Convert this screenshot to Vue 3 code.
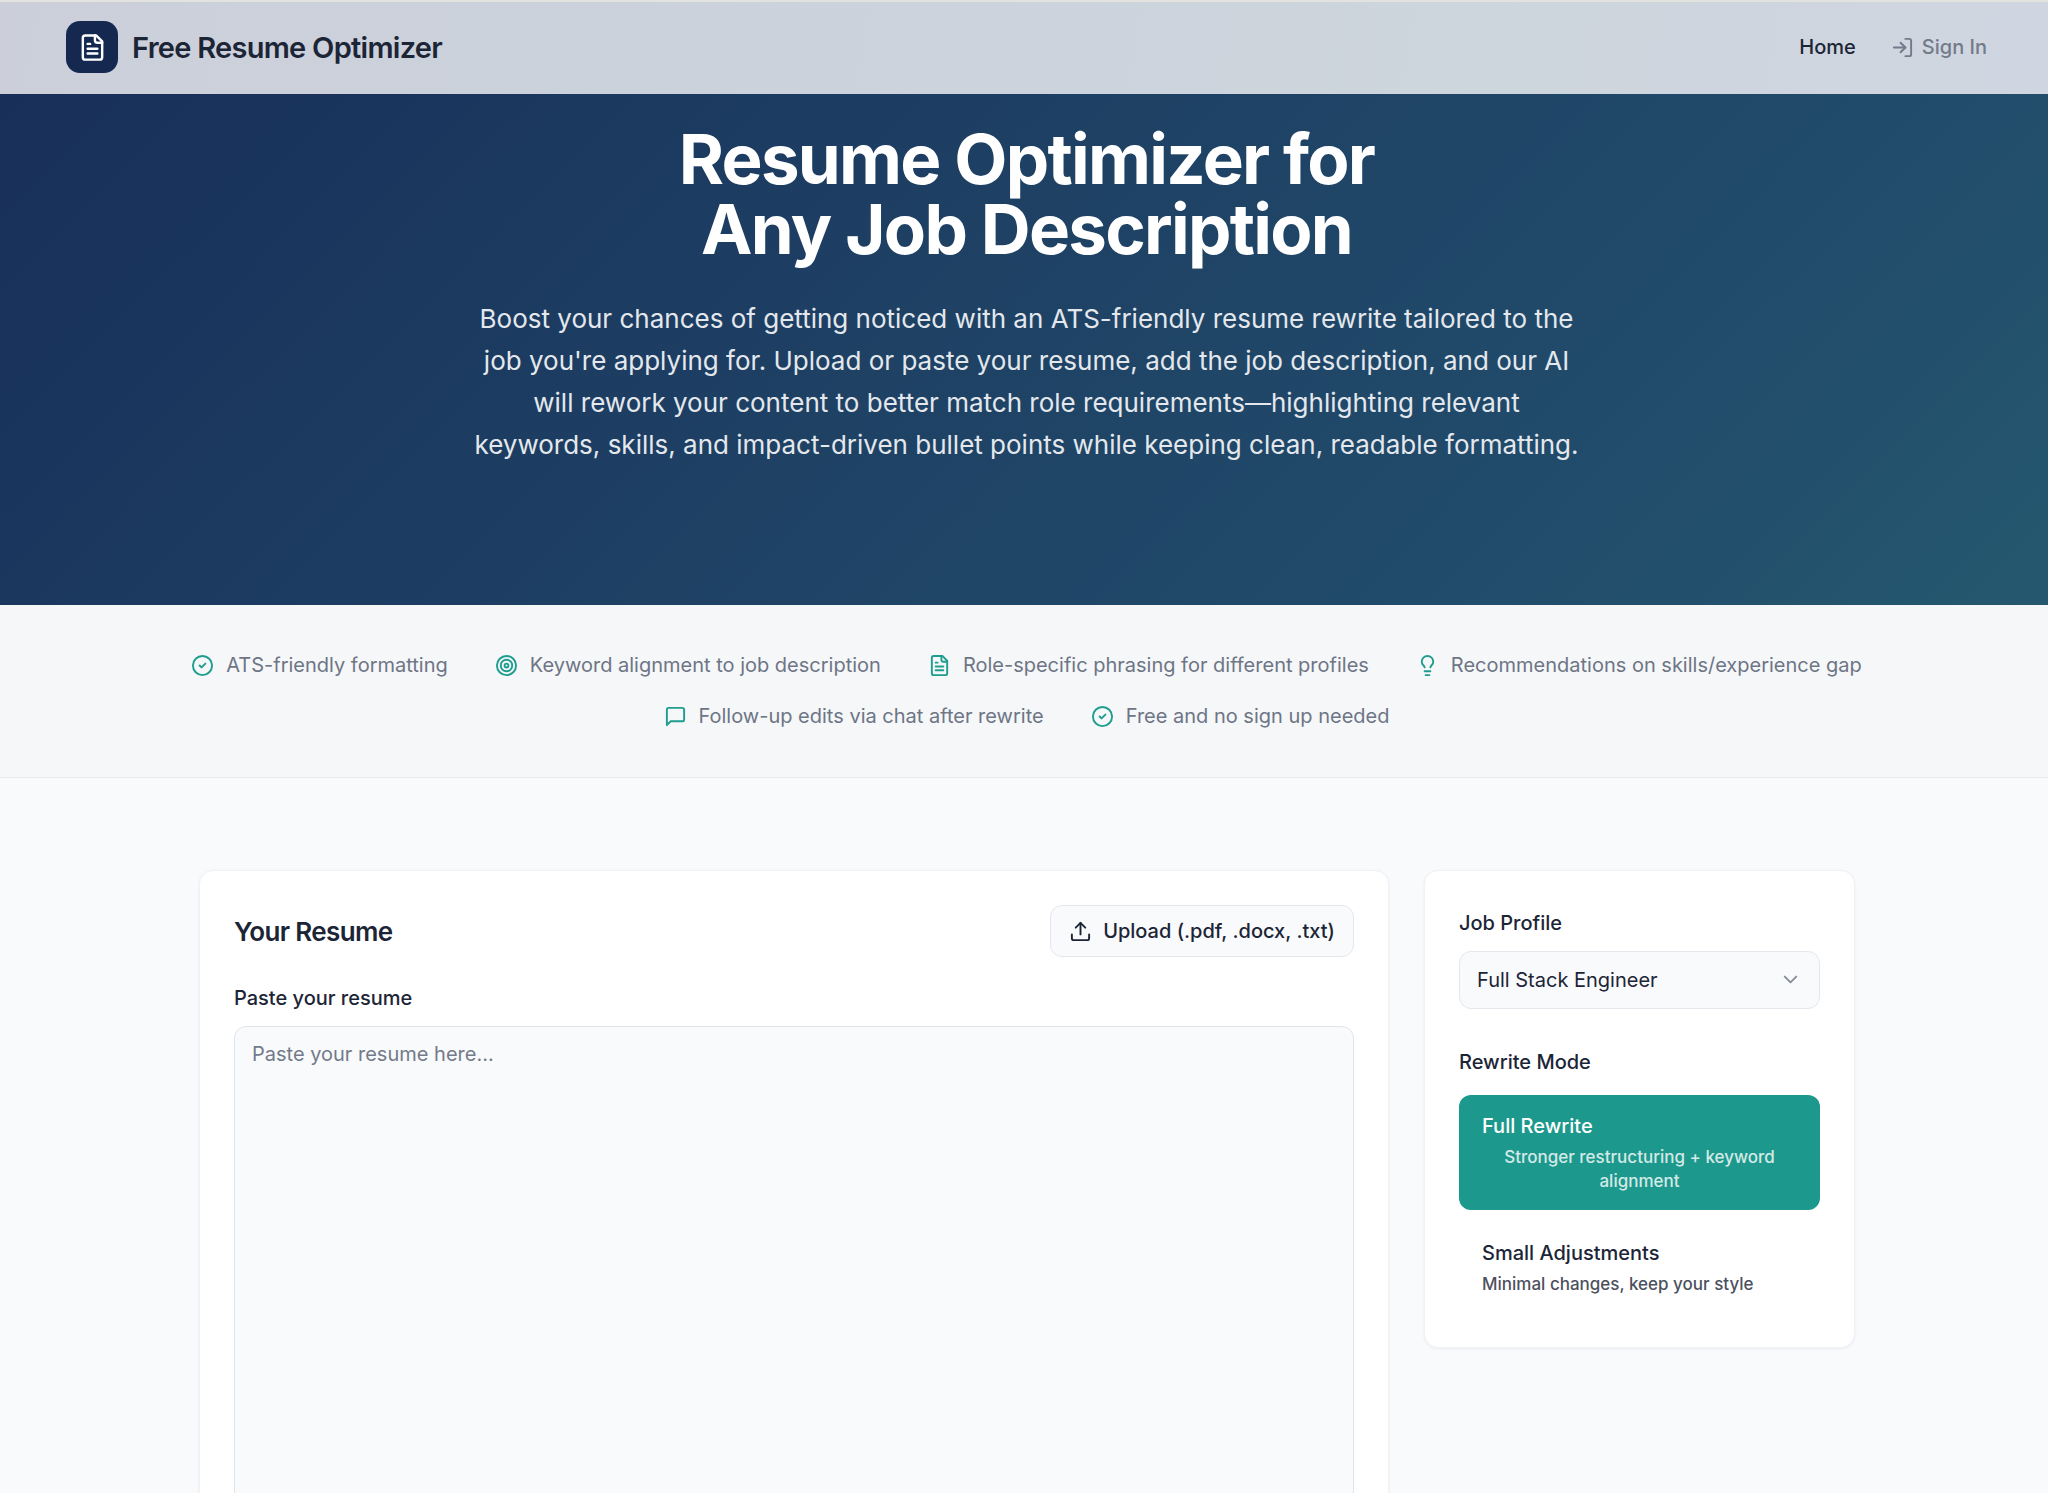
<template>
  <div class="page">
    <header class="navbar">
      <a class="brand" href="#">
        <span class="brand-icon">
          <svg class="icon icon-lg" viewBox="0 0 24 24">
            <path v-for="d in icons.file" :key="d" :d="d" />
          </svg>
        </span>
        <span class="brand-name">Free Resume Optimizer</span>
      </a>
      <nav class="nav-links">
        <a class="nav-link active" href="#">Home</a>
        <a class="nav-link" href="#">
          <svg class="icon" viewBox="0 0 24 24">
            <path v-for="d in icons.login" :key="d" :d="d" />
          </svg>
          Sign In
        </a>
      </nav>
    </header>

    <section class="hero">
      <h1>Resume Optimizer for<br />Any Job Description</h1>
      <p>
        Boost your chances of getting noticed with an ATS-friendly resume rewrite tailored to the
        job you're applying for. Upload or paste your resume, add the job description, and our AI
        will rework your content to better match role requirements—highlighting relevant
        keywords, skills, and impact-driven bullet points while keeping clean, readable formatting.
      </p>
    </section>

    <section class="features">
      <ul class="feature-list">
        <li v-for="feature in features" :key="feature.text" class="feature">
          <svg class="icon" viewBox="0 0 24 24">
            <path v-for="d in icons[feature.icon]" :key="d" :d="d" />
          </svg>
          <span>{{ feature.text }}</span>
        </li>
      </ul>
    </section>

    <main class="content">
      <section class="card">
        <div class="card-header">
          <h2>Your Resume</h2>
          <button class="btn-upload" type="button">
            <svg class="icon" viewBox="0 0 24 24">
              <path v-for="d in icons.upload" :key="d" :d="d" />
            </svg>
            Upload (.pdf, .docx, .txt)
          </button>
        </div>
        <label class="label" for="resume">Paste your resume</label>
        <textarea id="resume" v-model="resume" placeholder="Paste your resume here..."></textarea>
      </section>

      <aside class="card">
        <label class="label" for="profile">Job Profile</label>
        <div class="select-wrap">
          <select id="profile" v-model="profile">
            <option v-for="p in profiles" :key="p" :value="p">{{ p }}</option>
          </select>
          <svg class="icon chevron" viewBox="0 0 24 24">
            <path d="m6 9 6 6 6-6" />
          </svg>
        </div>

        <div class="mode-group" role="group" aria-labelledby="mode-label">
          <div id="mode-label" class="label">Rewrite Mode</div>
          <div class="modes">
            <button
              v-for="m in modes"
              :key="m.id"
              type="button"
              class="mode"
              :class="{ selected: mode === m.id }"
              :aria-pressed="mode === m.id"
              @click="mode = m.id"
            >
              <span>{{ m.title }}</span>
              <span class="mode-hint">{{ m.hint }}</span>
            </button>
          </div>
        </div>
      </aside>
    </main>
  </div>
</template>

<script setup>
import { ref } from 'vue'

const resume = ref('')
const profile = ref('Full Stack Engineer')
const mode = ref('full')

const profiles = ['Full Stack Engineer']

const modes = [
  { id: 'full', title: 'Full Rewrite', hint: 'Stronger restructuring + keyword alignment' },
  { id: 'small', title: 'Small Adjustments', hint: 'Minimal changes, keep your style' },
]

const features = [
  { icon: 'check', text: 'ATS-friendly formatting' },
  { icon: 'target', text: 'Keyword alignment to job description' },
  { icon: 'file', text: 'Role-specific phrasing for different profiles' },
  { icon: 'bulb', text: 'Recommendations on skills/experience gap' },
  { icon: 'chat', text: 'Follow-up edits via chat after rewrite' },
  { icon: 'check', text: 'Free and no sign up needed' },
]

// path data for the 24x24 outline icons
const icons = {
  file: [
    'M15 2H6a2 2 0 0 0-2 2v16a2 2 0 0 0 2 2h12a2 2 0 0 0 2-2V7Z',
    'M14 2v4a2 2 0 0 0 2 2h4',
    'M10 9H8',
    'M16 13H8',
    'M16 17H8',
  ],
  login: ['M15 3h4a2 2 0 0 1 2 2v14a2 2 0 0 1-2 2h-4', 'M10 17l5-5-5-5', 'M15 12H3'],
  check: ['M2 12a10 10 0 1 0 20 0a10 10 0 1 0-20 0', 'm9 12 2 2 4-4'],
  target: [
    'M2 12a10 10 0 1 0 20 0a10 10 0 1 0-20 0',
    'M6 12a6 6 0 1 0 12 0a6 6 0 1 0-12 0',
    'M10 12a2 2 0 1 0 4 0a2 2 0 1 0-4 0',
  ],
  bulb: [
    'M15 14c.2-1 .7-1.7 1.5-2.5 1-.9 1.5-2.2 1.5-3.5A6 6 0 0 0 6 8c0 1 .2 2.2 1.5 3.5.7.7 1.3 1.5 1.5 2.5',
    'M9 18h6',
    'M10 22h4',
  ],
  chat: ['M21 15a2 2 0 0 1-2 2H7l-4 4V5a2 2 0 0 1 2-2h14a2 2 0 0 1 2 2z'],
  upload: ['M21 15v4a2 2 0 0 1-2 2H5a2 2 0 0 1-2-2v-4', 'M17 8l-5-5-5 5', 'M12 3v12'],
}
</script>

<style>
body {
  margin: 0;
  background: #f9fafc;
}
</style>

<style scoped>
.page {
  min-height: 100vh;
  box-sizing: border-box;
  border-top: 2px solid #e2e2df;
  font-family: Inter, "Liberation Sans", sans-serif;
  font-size: 20px;
  line-height: 29px;
  color: #1c2536;
}

.icon {
  width: 23px;
  height: 23px;
  flex-shrink: 0;
  fill: none;
  stroke: currentColor;
  stroke-width: 2;
  stroke-linecap: round;
  stroke-linejoin: round;
}

.icon-lg {
  width: 29px;
  height: 29px;
}

/* top bar */
.navbar {
  display: flex;
  justify-content: space-between;
  align-items: center;
  padding: 19px 61px 21px 66px;
  background: linear-gradient(100deg, #cccfda, #cbd2dc 30%, #cdd5dd 75%, #d0d6e1);
}

.brand {
  display: flex;
  align-items: center;
  gap: 14px;
  color: inherit;
  text-decoration: none;
}

.brand-icon {
  display: flex;
  align-items: center;
  justify-content: center;
  width: 52px;
  height: 52px;
  border-radius: 14px;
  background: #142850;
  color: #fff;
}

.brand-name {
  font-size: 29px;
  font-weight: 600;
  letter-spacing: -0.025em;
}

.nav-links {
  display: flex;
  gap: 35px;
}

.nav-link {
  display: flex;
  align-items: center;
  gap: 8px;
  font-weight: 500;
  color: #737a89;
  text-decoration: none;
}

.nav-link.active {
  color: #1c2536;
}

/* hero */
.hero {
  padding: 30px 0 139px 5px;
  background: linear-gradient(135deg, #182f59, #1e4164 45%, #214b6b 75%, #25586f);
  text-align: center;
}

.hero h1 {
  margin: 0 0 34px;
  font-size: 69px;
  line-height: 70px;
  font-weight: 700;
  letter-spacing: -0.025em;
  color: #fff;
}

.hero p {
  max-width: 1114px;
  margin: 0 auto;
  font-size: 26px;
  line-height: 42px;
  color: #e4e8ed;
}

/* feature strip */
.features {
  padding: 46px 0 46px 5px;
  background: #f5f7f9;
  border-bottom: 1px solid #e6e9ed;
}

.feature-list {
  display: flex;
  flex-wrap: wrap;
  justify-content: center;
  gap: 22px 47px;
  max-width: 1700px;
  margin: 0 auto;
  padding: 0;
  list-style: none;
}

.feature {
  display: flex;
  align-items: center;
  gap: 12px;
  color: #6e7585;
}

.feature .icon {
  color: #1f9d8f;
}

/* main grid */
.content {
  display: grid;
  grid-template-columns: minmax(0, 1fr) 431px;
  gap: 35px;
  align-items: start;
  max-width: 1656px;
  margin: 0 auto;
  padding: 92px 0 92px 6px;
}

.card {
  padding: 34px;
  background: #fff;
  border: 1px solid #f0f2f5;
  border-radius: 14px;
  box-shadow: 0 1px 3px rgba(20, 40, 80, 0.06);
}

.card-header {
  display: flex;
  justify-content: space-between;
  align-items: center;
  margin-bottom: 23px;
}

.card-header h2 {
  margin: 0;
  font-size: 26px;
  font-weight: 600;
  letter-spacing: -0.025em;
}

.btn-upload {
  display: flex;
  align-items: center;
  gap: 11px;
  height: 52px;
  padding: 0 18px;
  background: #f9fafc;
  border: 1px solid #e3e7ec;
  border-radius: 12px;
  font: inherit;
  font-weight: 500;
  color: inherit;
}

.label {
  display: block;
  margin-bottom: 10px;
  line-height: 36px;
  font-weight: 500;
}

textarea {
  display: block;
  box-sizing: border-box;
  width: 100%;
  height: 580px;
  padding: 13px 17px;
  background: #f9fafc;
  border: 1px solid #e0e5eb;
  border-radius: 12px;
  font: inherit;
  color: inherit;
  resize: none;
}

textarea::placeholder {
  color: #737a89;
}

.select-wrap {
  position: relative;
}

select {
  display: block;
  box-sizing: border-box;
  width: 100%;
  height: 58px;
  padding: 0 46px 0 17px;
  appearance: none;
  background: #f9fafc;
  border: 1px solid #e3e7ec;
  border-radius: 12px;
  font: inherit;
  color: inherit;
}

/* sits over the select's right edge */
.chevron {
  position: absolute;
  top: 17px;
  right: 18px;
  opacity: 0.5;
  pointer-events: none;
}

.mode-group {
  margin-top: 35px;
}

.mode-group .label {
  margin-bottom: 15px;
}

.modes {
  display: flex;
  flex-direction: column;
  gap: 12px;
}

.mode {
  display: flex;
  flex-direction: column;
  align-items: flex-start;
  gap: 4px;
  padding: 17px 23px;
  background: transparent;
  border: 0;
  border-radius: 12px;
  font: inherit;
  font-weight: 500;
  color: inherit;
}

.mode.selected {
  background: #1c988c;
  color: #fff;
}

.mode-hint {
  font-size: 17px;
  line-height: 24px;
  opacity: 0.8;
}
</style>
